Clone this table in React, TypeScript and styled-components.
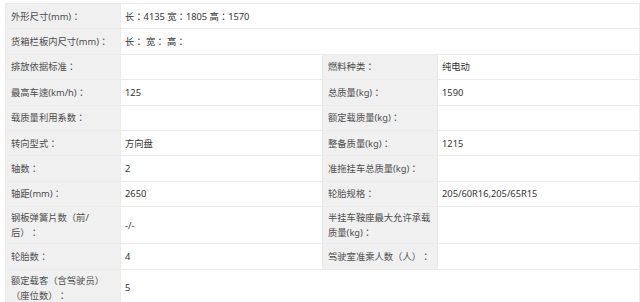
import React from 'react';
import styled, { createGlobalStyle } from 'styled-components';

interface SpecRow {
  label: string;
  value: string;
  label2?: string;
  value2?: string;
  wide?: boolean;
}

const rows: SpecRow[] = [
  { label: '外形尺寸(mm)：', value: '长：4135 宽：1805 高：1570', wide: true },
  { label: '货箱栏板内尺寸(mm)：', value: '长： 宽： 高：', wide: true },
  { label: '排放依据标准：', value: '', label2: '燃料种类：', value2: '纯电动' },
  { label: '最高车速(km/h)：', value: '125', label2: '总质量(kg)：', value2: '1590' },
  { label: '载质量利用系数：', value: '', label2: '额定载质量(kg)：', value2: '' },
  { label: '转向型式：', value: '方向盘', label2: '整备质量(kg)：', value2: '1215' },
  { label: '轴数：', value: '2', label2: '准拖挂车总质量(kg)：', value2: '' },
  { label: '轴距(mm)：', value: '2650', label2: '轮胎规格：', value2: '205/60R16,205/65R15' },
  { label: '钢板弹簧片数（前/后）：', value: '-/-', label2: '半挂车鞍座最大允许承载质量(kg)：', value2: '' },
  { label: '轮胎数：', value: '4', label2: '驾驶室准乘人数（人）：', value2: '' },
  { label: '额定载客（含驾驶员）（座位数）：', value: '5', wide: true },
];

const GlobalStyle = createGlobalStyle`
  body {
    margin: 0;
    background: #fff;
    font-family: "Noto Sans", "Noto Sans CJK TC", sans-serif;
  }
`;

const App: React.FC = () => {
  return (
    <Page>
      <GlobalStyle />
      <SpecTable>
        <colgroup>
          <col style={{ width: 115 }} />
          <col style={{ width: 202 }} />
          <col style={{ width: 115 }} />
          <col style={{ width: 202 }} />
        </colgroup>
        <tbody>
          {rows.map((row, index) => (
            <Row key={index}>
              <Label>{row.label}</Label>
              {row.wide ? (
                <Value colSpan={3}>{row.value}</Value>
              ) : (
                <>
                  <Value>{row.value}</Value>
                  <Label>{row.label2}</Label>
                  <Value>{row.value2}</Value>
                </>
              )}
            </Row>
          ))}
        </tbody>
      </SpecTable>
    </Page>
  );
};

const Page = styled.div`
  padding: 3px 1px 0 5px;
`;

const SpecTable = styled.table`
  width: 634px;
  table-layout: fixed;
  border-collapse: collapse;
  font-size: 9.3px;
  text-spacing-trim: space-all;
`;

const Row = styled.tr`
  height: 25.4px;
`;

const Label = styled.td`
  background: #f0f0f0;
  color: #4d4d4d;
  padding: 3px 6px 3px 5px;
  line-height: 15px;
  border: 1px solid #ebebeb;
  vertical-align: middle;
`;

const Value = styled.td`
  background: #fff;
  color: #333;
  padding: 3px 4px;
  line-height: 15px;
  border: 1px solid #ebebeb;
  vertical-align: middle;
`;

export default App;
